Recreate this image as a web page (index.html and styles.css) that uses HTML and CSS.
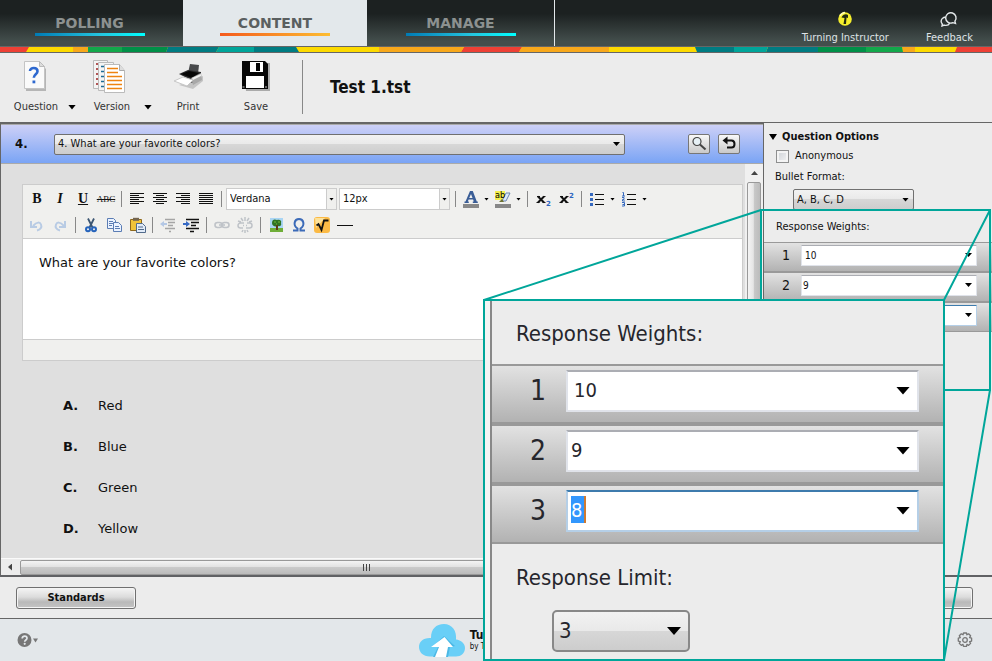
FILE: index.html
```html
<!DOCTYPE html>
<html lang="en">
<head>
<meta charset="utf-8">
<title>Test 1.tst</title>
<link rel="stylesheet" href="styles.css">
</head>
<body>
<header class="topbar">
  <nav class="tabs">
    <a class="tab" href="#polling">POLLING</a>
    <a class="tab tab-active" href="#content">CONTENT</a>
    <a class="tab tab-last" href="#manage">MANAGE</a>
  </nav>
  <div class="account">
    <a class="account-link" href="#instructor">
      <svg width="16" height="16" viewBox="0 0 16 16"><circle cx="8" cy="8" r="6.800" fill="#f5ee2c"/><path d="M3 5a6 6 0 0 1 5-3.500" stroke="#fffcb0" stroke-width="1.500" fill="none"/><path d="M4.500 6.500C6 3.500 9 2.500 11 4v3L9.500 6.500 9 13H6.500l1-6z" fill="#222a10"/></svg>
      <span>Turning Instructor</span>
    </a>
    <a class="account-link" href="#feedback">
      <svg width="18" height="16" viewBox="0 0 18 16" fill="none" stroke="#e4e8ea" stroke-width="1.400"><path d="M15.500 12.500l-.6-2.300a5.200 5.200 0 1 0-2 1.500z"/><path d="M6 6C2.500 6.200.9 8.500 1.200 10.800c.2 1 .6 1.600 1.100 2.100L2 15l2.200-.9c2.400.6 4.600-.2 5.600-2"/></svg>
      <span>Feedback</span>
    </a>
  </div>
</header>
<svg class="stripe" viewBox="0 0 992 5" preserveAspectRatio="none">
  <path fill="#fdda00" d="M0 0h992v5H0z"/>
  <path fill="#ee4035" d="M0 0h29l-3 5H0zM464 0h58l-3 5h-58zM957 0h35v5h-37z"/>
  <path fill="#f8a81b" d="M73 0h15v5H73zM379 0h85l-3 5h-82zM522 0h87v5h-90zM902 0h13v5h-12z"/>
  <path fill="#12a84b" d="M88 0h34v5H88zM866 0h36l1 5h-37z"/>
  <path fill="#009048" d="M122 0h46l-2 5h-44zM818 0h48v5h-48z"/>
  <path fill="#007c82" d="M168 0h51l-3 5h-50zM254 0h42l3 5h-45zM695 0h39v5h-37zM768 0h50v5h-52z"/>
  <path fill="#00a59a" d="M219 0h35v5h-38zM734 0h34l-2 5h-32z"/>
</svg>

<div class="toolbar">
  <button class="tool tool-drop" type="button">
    <svg width="32" height="32" viewBox="0 0 32 32"><path d="M6 3h14l6 6v22H6z" fill="#b5b5b5"/><path d="M4.500 1.500h15l5 5v22h-20z" fill="#fafafa" stroke="#c4c4c4"/><path d="M19.500 1.500v5h5z" fill="#ddd" stroke="#bbb"/><path d="M10 11c0-4 7.500-4 7.500.2 0 3-3.700 3-3.700 6.600" fill="none" stroke="#2d68cf" stroke-width="2.600"/><rect x="12.500" y="20.500" width="2.800" height="2.800" fill="#2d68cf"/></svg>
    <span>Question</span>
  </button>
  <button class="tool tool-drop" type="button">
    <svg width="40" height="34" viewBox="0 0 40 34"><path d="M1.500.5h14v28h-14z" fill="#f4f4f4" stroke="#bbb"/><path d="M4 4h4M4 9h4M4 14h4M4 19h4M4 24h4" stroke="#9b2020" stroke-width="1.300"/><path d="M6.500 2.500h15v28h-15z" fill="#f4f4f4" stroke="#bbb"/><path d="M9 6.500h4M9 11.500h4M9 16.500h4M9 21.500h4M9 26.500h4" stroke="#1d6c96" stroke-width="1.300"/><path d="M12.500 4.500h15l5 6v22h-20z" fill="#fff" stroke="#bbb"/><path d="M27.500 4.500v6h5" fill="#ddd" stroke="#aaa"/><path d="M15 8.500h11M15 12.500h11M15 16.500h15M15 20.500h15M15 24.500h15M15 28.500h15" stroke="#ee8310" stroke-width="1.300"/></svg>
    <span>Version</span>
  </button>
  <button class="tool" type="button">
    <svg width="34" height="30" viewBox="0 0 34 30"><path d="M8 25l14 4 10-8v-5z" fill="#c4c4c4"/><path d="M19 4l9 1-1 9-10-1z" fill="#48494b"/><path d="M8 14l9-4 13 2v5l-9 6-5-5z" fill="#2a2a2b"/><path d="M10 14l8-3 10 2-7 5z" fill="#060606"/><path d="M20 18l10-5 1 7-9 5z" fill="#a8a8a8"/><path d="M21 18l9-4v2l-8 4z" fill="#eee"/><path d="M3 21l9-4 10 3-6 6z" fill="#fff" stroke="#c8c8c8"/></svg>
    <span>Print</span>
  </button>
  <button class="tool" type="button">
    <svg width="32" height="32" viewBox="0 0 32 32"><path d="M4 3h26v28H6z" fill="#aaa"/><path d="M2 1h23l3 3v25H2z" fill="#060606"/><path d="M10 2h13v10H10z" fill="#fff"/><path d="M16 3h4v8h-4z" fill="#060606"/><path d="M6 16h18v12H6z" fill="#fff"/><path d="M2.500 26h2v2h-2zM25 26h2v2h-2z" fill="#666"/></svg>
    <span>Save</span>
  </button>
  <h1 class="file-title">Test 1.tst</h1>
</div>

<div class="workspace">
  <main class="question-pane">
    <div class="question-head">
      <label class="question-number" for="question">4.</label>
      <div class="pick question-pick"><select id="question"><option>4. What are your favorite colors?</option></select></div>
      <button class="icon-button" type="button" aria-label="Search"><svg width="18" height="18" viewBox="0 0 18 18" fill="none" stroke="#444"><circle cx="7" cy="6.500" r="4" fill="#e6f0f5" stroke-width="1.200"/><path d="M10 9.500l5.500 5" stroke-width="2"/></svg></button>
      <button class="icon-button" type="button" aria-label="Revert"><svg width="18" height="18" viewBox="0 0 18 18"><path d="M6 5.500h5.500q3 0 3 3.500t-3 3.500H7" fill="none" stroke="#111" stroke-width="2"/><path d="M2.500 5.500L7.500 1.500v8z" fill="#111"/></svg></button>
    </div>
    <div class="canvas">
      <div class="canvas-body">
        <section class="editor">
          <div class="edit-tools">
            <div class="edit-row">
              <button class="ed ed-b" type="button">B</button>
              <button class="ed ed-i" type="button">I</button>
              <button class="ed ed-u" type="button">U</button>
              <button class="ed ed-s" type="button">ABC</button>
              <i class="sep"></i>
              <button class="ed" type="button" aria-label="Left"><svg width="16" height="16"><path d="M1 2.500h14M1 4.500h9M1 6.500h14M1 8.500h9M1 10.500h14M1 12.500h9" stroke="#111"/></svg></button>
              <button class="ed" type="button" aria-label="Center"><svg width="16" height="16"><path d="M1 2.500h14M4 4.500h8M1 6.500h14M4 8.500h8M1 10.500h14M4 12.500h8" stroke="#111"/></svg></button>
              <button class="ed" type="button" aria-label="Right"><svg width="16" height="16"><path d="M1 2.500h14M6 4.500h9M1 6.500h14M6 8.500h9M1 10.500h14M6 12.500h9" stroke="#111"/></svg></button>
              <button class="ed" type="button" aria-label="Justify"><svg width="16" height="16"><path d="M1 2.500h14M1 4.500h14M1 6.500h14M1 8.500h14M1 10.500h14M1 12.500h14" stroke="#111"/></svg></button>
              <i class="sep"></i>
              <div class="pick font-pick"><select aria-label="Font"><option>Verdana</option></select></div>
              <div class="pick font-pick"><select aria-label="Size"><option>12px</option></select></div>
              <i class="sep"></i>
              <button class="ed ed-drop" type="button" aria-label="Text color"><svg width="18" height="18"><path d="M8 1h2.800l4 10.500h1V13h-5v-1.500h1l-.7-2H6.600l-.8 2h1V13H2.500v-1.500h1zM9 4L7.200 8h3.300z" fill="#3a5d96"/><path d="M1 14h16v4H1z" fill="#888"/></svg></button>
              <button class="ed ed-drop" type="button" aria-label="Highlight"><svg width="18" height="18"><path d="M1 1h10v9H1z" fill="#f4ee4c"/><path d="M12 3h4l-4 8H8z" fill="#dce8fa" stroke="#6d86b0"/><path d="M5 12l3-3 2 3z" fill="#6d7230"/><text class="glyph-ab" x="1" y="8">ab</text><path d="M1 14h16v4H1z" fill="#888"/></svg></button>
              <i class="sep"></i>
              <button class="ed" type="button" aria-label="Subscript"><svg width="16" height="16"><path d="M3 5.500l6 6M9 5.500l-6 6" stroke="#111" stroke-width="2"/><path d="M2 5.500h3M8 5.500h2.500M1.500 11.500h3M7.500 11.500h3" stroke="#111"/><text class="glyph-mini" x="11" y="15">2</text></svg></button>
              <button class="ed" type="button" aria-label="Superscript"><svg width="16" height="16"><path d="M3 5.500l6 6M9 5.500l-6 6" stroke="#111" stroke-width="2"/><path d="M2 5.500h3M8 5.500h2.500M1.500 11.500h3M7.500 11.500h3" stroke="#111"/><text class="glyph-mini" x="11" y="7">2</text></svg></button>
              <i class="sep"></i>
              <button class="ed ed-drop" type="button" aria-label="Bullets"><svg width="16" height="16"><path d="M6 3.500h9M6 8.500h9M6 13.500h9" stroke="#111"/><path d="M1 2h3v3H1zM1 7h3v3H1zM1 12h3v3H1z" fill="#3569bf"/></svg></button>
              <button class="ed ed-drop" type="button" aria-label="Numbering"><svg width="16" height="16"><path d="M6 3.500h9M6 8.500h9M6 13.500h9" stroke="#111"/><path d="M1.500 1.500h1V5M1 5h3M1 6.500h2v2H1.500v1.500H4M1 11.500h2.500v3.500H1M1.500 13.500h2" fill="none" stroke="#3569bf"/></svg></button>
            </div>
            <div class="edit-row">
              <button class="ed" type="button" aria-label="Undo"><svg width="16" height="16" fill="none" stroke="#b8cbe4" stroke-width="2"><path d="M8 13.500c4-1 5-3.500 4-6s-4-3-8 1.500"/><path d="M2 4v6h6" /></svg></button>
              <button class="ed" type="button" aria-label="Redo"><svg width="16" height="16" fill="none" stroke="#b8cbe4" stroke-width="2"><path d="M8 13.500c-4-1-5-3.500-4-6s4-3 8 1.500"/><path d="M13 4v6H7"/></svg></button>
              <i class="sep"></i>
              <button class="ed" type="button" aria-label="Cut"><svg width="16" height="16" fill="none"><path d="M5 1.500l4.500 9M11 1.500l-4.500 9" stroke="#3c5673" stroke-width="1.800"/><circle cx="5" cy="12.300" r="2" stroke="#2563bb" stroke-width="2"/><circle cx="11" cy="12.300" r="2" stroke="#2563bb" stroke-width="2"/></svg></button>
              <button class="ed" type="button" aria-label="Copy"><svg width="16" height="16" fill="#eaf2ff" stroke="#5b7db4"><path d="M1.500 1.500h6l2 2v8h-8zM3 4.500h4M3 6.500h4M3 8.500h3"/><path d="M7.500 5.500h5l3 3v6h-8zM9 9.500h4M9 11.500h5"/></svg></button>
              <button class="ed" type="button" aria-label="Paste"><svg width="17" height="16"><path d="M1.500 2.500h11v11h-11z" fill="#f0c33a" stroke="#8e681c"/><path d="M4 .8h6v3H4z" fill="#746550"/><path d="M7.500 6.500h6l3 3v6h-9z" fill="#e1ebf8" stroke="#526b8b"/><path d="M9 10h5M9 12.500h6" stroke="#526b8b"/></svg></button>
              <i class="sep"></i>
              <button class="ed" type="button" aria-label="Outdent"><svg width="18" height="16"><path d="M6 2.500h10M9 5.500h7M9 8.500h5M6 11.500h10M10 14.500h2" stroke="#a5a5a5" stroke-width="1.500"/><path d="M1 7l4-3v2h3v2H5v2z" fill="#b4c8e5"/></svg></button>
              <button class="ed" type="button" aria-label="Indent"><svg width="18" height="16"><path d="M4 2.500h13M9 5.500h8M9 8.500h5M4 11.500h13M8 14.500h4" stroke="#111" stroke-width="1.500"/><path d="M8 7L4 4v2H1v2h3v2z" fill="#3669c4"/></svg></button>
              <i class="sep"></i>
              <button class="ed" type="button" aria-label="Link"><svg width="16" height="16" fill="none" stroke="#bfc3c8" stroke-width="1.600"><rect x="1" y="5.500" width="7" height="5" rx="2.500"/><rect x="8" y="5.500" width="7" height="5" rx="2.500"/><path d="M5 8h6"/></svg></button>
              <button class="ed" type="button" aria-label="Unlink"><svg width="16" height="16" fill="none" stroke="#bfc3c8" stroke-width="1.500"><path d="M7 6H3.500a2.500 2.500 0 0 0 0 5H6M9 11h3.500a2.500 2.500 0 0 0 0-5H10M6 8.500h1M9 8.500h1M8 0v4M4 1l2 3M12 1l-2 3M1 4l3 1M15 4l-3 1M8 16v-3M5 15l1-2M11 15l-1-2"/></svg></button>
              <i class="sep"></i>
              <button class="ed" type="button" aria-label="Image"><svg width="16" height="16"><path d="M2 1h13v10H2z" fill="#a9d5f4"/><path d="M2 11h13v4H2z" fill="#6fae38"/><path d="M4 6c0-4 3-4 5-3 3-1 5 1 4 3 1 2-1 4-3 3-3 1-6 0-6-3z" fill="#2e7424"/><path d="M8 8h2v5H8z" fill="#5c3b18"/><path d="M6 5h2M10 5h2M8 7h1" stroke="#77b83a"/></svg></button>
              <button class="ed" type="button" aria-label="Symbol"><svg width="16" height="16"><path d="M2 13.500h4.500v-2C1.500 8 3.500 2 8 2s6.500 6 1.500 9.500v2H14" fill="none" stroke="#3c6bb8" stroke-width="2"/></svg></button>
              <button class="ed" type="button" aria-label="Equation"><svg width="18" height="18"><rect x="1" y="1" width="16" height="16" rx="3" fill="#fbba45"/><path d="M2 2h10L3 12z" fill="#fde29a"/><path d="M3.500 9.500l2-1.500 3 6 2.500-9.500h4.500" fill="none" stroke="#111" stroke-width="1.800"/></svg></button>
              <button class="ed" type="button" aria-label="Rule"><svg width="16" height="16"><path d="M0 8.500h16" stroke="#111"/></svg></button>
            </div>
          </div>
          <textarea class="edit-text" aria-label="Question text">What are your favorite colors?</textarea>
          <div class="edit-status"></div>
        </section>
        <ol class="answers">
          <li><b>A.</b><span>Red</span></li>
          <li><b>B.</b><span>Blue</span></li>
          <li><b>C.</b><span>Green</span></li>
          <li><b>D.</b><span>Yellow</span></li>
        </ol>
      </div>
      <div class="vscroll"><i class="arrow-up"></i><div class="vthumb"></div></div>
    </div>
    <div class="hscroll"><i class="arrow-left"></i><div class="hthumb"><i></i><i></i><i></i></div></div>
  </main>
  <aside class="options">
    <h2 class="options-title">Question Options</h2>
    <label class="check"><input type="checkbox">Anonymous</label>
    <label class="options-label" for="bullets">Bullet Format:</label>
    <div class="pick bullet-pick"><select id="bullets"><option>A, B, C, D</option></select></div>
    <h3 class="weights-title">Response Weights:</h3>
    <div class="weight"><label for="w1">1</label><div class="combo"><input id="w1" value="10"></div></div>
    <div class="weight"><label for="w2">2</label><div class="combo"><input class="one-digit" id="w2" value="9"></div></div>
    <div class="weight"><label for="w3">3</label><div class="combo combo-focus"><input class="one-digit" id="w3" value="8"></div></div>
  </aside>
</div>

<div class="actions">
  <button class="action" type="button">Standards</button>
  <button class="action" type="button" aria-label="Save"></button>
</div>

<footer class="footer">
  <button class="help" type="button" aria-label="Help"><svg width="22" height="16" viewBox="0 0 22 16"><circle cx="7.500" cy="8" r="7" fill="#777"/><path d="M5.200 6.500c0-3.200 4.800-3 4.800-.2 0 1.700-2.300 1.700-2.300 3.500" fill="none" stroke="#e4e8eb" stroke-width="1.700"/><circle cx="7.700" cy="11.800" r="1.100" fill="#e4e8eb"/><path d="M16 6.500h5l-2.500 4z" fill="#777"/></svg></button>
  <div class="brand">
    <svg width="46" height="33" viewBox="0 0 46 33"><path d="M11 32.500C4 32.500 0 28 0 23c0-5 4-9.500 12-9C12 5 17 0 25 0s13 7 12 15.500c5 .5 9 4 9 8.500 0 5-4 8.500-9 8.500z" fill="#69cff7"/><path d="M14 33l5-10h-6l12-11 11 10-5 1-2 10z" fill="#4cb8e5"/><path d="M16 33l4-10h-8l13.500-10L34 23h-5l-2 10z" fill="#fff"/></svg>
    <div><strong>Tu</strong><small>by T</small></div>
  </div>
  <button class="gear" type="button" aria-label="Settings"><svg width="16" height="16" viewBox="0 0 16 16" fill="none" stroke="#777"><path stroke-width="1.300" stroke-linejoin="round" d="M6.500 1h3l.4 1.800 1.700-1 2 2-1 1.800 2 .5v3l-2 .5 1 1.800-2 2-1.700-1-.4 1.900h-3l-.5-1.900-1.700 1-2-2 1-1.800-2-.5v-3l2-.5-1-1.800 2-2 1.700 1z"/><circle cx="8" cy="8" r="2.300" stroke-width="1.300"/></svg></button>
</footer>

<svg class="leader" width="992" height="661" fill="none" stroke="#00a69a" stroke-width="2"><path d="M761 210h229v180H761z"/><path d="M484 300l277-90M944 300l46-90M944 660l46-270"/></svg>
<section class="callout" aria-label="Response weights">
  <h3 class="big-title">Response Weights:</h3>
  <div class="weight big-weight"><label for="b1">1</label><div class="combo"><input id="b1" value="10"></div></div>
  <div class="weight big-weight"><label for="b2">2</label><div class="combo"><input class="one-digit" id="b2" value="9"></div></div>
  <div class="weight big-weight"><label for="b3">3</label><div class="combo combo-focus"><input class="one-digit selected" id="b3" value="8"></div></div>
  <label class="big-label" for="limit">Response Limit:</label>
  <div class="pick limit-pick"><select id="limit"><option>3</option></select></div>
</section>
</body>
</html>
```

FILE: styles.css
```css
* { box-sizing: border-box; }

body {
  margin: 0;
  min-height: 100vh;
  position: relative;
  display: flex;
  flex-direction: column;
  background: #ececec;
  color: #111;
  font: 11px/14px "DejaVu Sans Condensed", "DejaVu Sans", sans-serif;
}

button, select, input, textarea { font: inherit; color: inherit; }
button { padding: 0; border: 0; background: none; }
h1, h2, h3 { margin: 0; }
svg { display: block; }

/* top navigation */
.topbar {
  height: 46px;
  display: flex;
  justify-content: space-between;
  background: linear-gradient(#1c2121 30%, #434e4c 90%);
}
.tabs { display: flex; }
.tab {
  width: 183px;
  padding: 14px 4px 0 0;
  color: #8c9190;
  font-family: "DejaVu Sans", sans-serif;
  font-size: 14px;
  line-height: 18px;
  font-weight: bold;
  text-align: center;
  text-decoration: none;
}
.tab::after {
  content: "";
  display: block;
  width: 110px;
  height: 3px;
  margin: 1px auto 0;
  background: linear-gradient(90deg, #007bb5, #25c6e0 60%, #00ffff);
}
.tab-active { width: 184px; padding-right: 0; background: #e3e8eb; color: #5a5f60; }
.tab-active::after { background: linear-gradient(90deg, #f45a1c, #fdbd31); }
.tab-last { width: 188px; padding-right: 0; border-right: 1px solid #e3e8eb; }
.account { display: flex; padding: 11px 19px 0 0; gap: 37px; }
.account-link {
  display: flex;
  flex-direction: column;
  align-items: center;
  gap: 4px;
  color: #dfe3e5;
  text-decoration: none;
}
.stripe {
  width: 100%;
  height: 7px;
  border: solid #666;
  border-width: 1px 0;
}

/* file toolbar */
.toolbar { display: flex; height: 69px; padding: 7px 0 0 12px; }
.tool {
  width: 48px;
  margin-right: 20px;
  display: grid;
  grid-template-rows: 40px 14px;
  justify-items: center;
  color: #333;
}
.tool-drop { width: 64px; margin-right: 12px; grid-template-columns: 48px 16px; }
.tool-drop svg { grid-area: 1 / 1; }
.tool-drop span { grid-area: 2 / 1; }
.tool-drop::after {
  content: "";
  grid-area: 2 / 2;
  align-self: center;
  justify-self: end;
  width: 8px;
  height: 5px;
  background: #000;
  clip-path: polygon(0 0, 100% 0, 50% 100%);
}
.file-title {
  height: 54px;
  margin-left: 2px;
  padding-left: 27px;
  border-left: 1px solid #888;
  font-size: 17px;
  line-height: 54px;
}

/* work area */
.workspace { flex: 1; display: flex; border-top: 1px solid #666; border-bottom: 2px solid #606164; }
.question-pane {
  flex: 1;
  min-width: 0;
  display: flex;
  flex-direction: column;
  border: solid #666;
  border-width: 1px 1px 0 1px;
  background: #dfdfdf;
}
.question-head {
  display: flex;
  align-items: center;
  height: 40px;
  padding: 0 23px 0 14px;
  border: solid #aaa;
  border-width: 1px 0;
  background: linear-gradient(#cdd0f7, #7aa4f5);
}
.question-number { width: 39px; font-size: 13px; font-weight: bold; }
.pick { display: grid; align-items: center; }
.pick select {
  grid-area: 1 / 1;
  appearance: none;
  width: 100%;
  height: 21px;
  padding: 0 16px 0 3px;
  border: 1px solid #707070;
  border-radius: 2px;
  background: linear-gradient(#f2f2f2, #e9e9e9 49%, #d7d7d7 50%, #cdcdcd);
}
.pick::after, .combo::after {
  content: "";
  grid-area: 1 / 1;
  justify-self: end;
  width: 7px;
  height: 4px;
  margin-right: 5px;
  background: #000;
  clip-path: polygon(0 0, 100% 0, 50% 100%);
  pointer-events: none;
}
.question-pick { flex: 1; margin-right: 63px; }
.icon-button {
  width: 22px;
  height: 20px;
  display: grid;
  place-items: center;
  border: 1px solid #777;
  border-radius: 2px;
  background: linear-gradient(#f8f8f8, #c9c9c9);
}
.icon-button + .icon-button { margin-left: 8px; }

.canvas { flex: 1; display: flex; }
.canvas-body { flex: 1; padding: 20px 2px 0 21px; }
.editor { border: 1px solid #ccc; background: #f0f0ee; }
.edit-tools { padding: 3px 3px 2px; border-bottom: 1px solid #ccc; }
.edit-row { display: flex; align-items: center; gap: 1px; height: 22px; }
.edit-row + .edit-row { margin-top: 4px; }
.ed { width: 22px; height: 22px; display: grid; place-items: center; }
.ed-drop { width: 31px; grid-template-columns: 22px 9px; }
.ed-drop::after {
  content: "";
  width: 5px;
  height: 3px;
  background: #000;
  clip-path: polygon(0 0, 100% 0, 50% 100%);
}
.ed-b, .ed-i, .ed-u { font: bold 14px/22px "Liberation Serif", serif; }
.ed-i { font-style: italic; }
.ed-u { text-decoration: underline; }
.ed-s { font: 9px/22px "Liberation Serif", serif; text-decoration: line-through; }
.glyph-ab { font: 9px "DejaVu Sans Condensed", sans-serif; }
.glyph-mini { font: bold 7px "DejaVu Sans", sans-serif; fill: #2d64c0; }
.sep { width: 7px; height: 16px; background: linear-gradient(#888, #888) 3px 0 / 1px 100% no-repeat; }
.font-pick { width: 111px; margin-right: 1px; }
.font-pick select {
  height: 22px;
  border: 1px solid #ccc;
  border-radius: 0;
  background: linear-gradient(90deg, #ccc 1px, #f0f0ee 1px) right / 10px 100% no-repeat #fff;
}
.font-pick::after { width: 5px; height: 3px; margin-right: 3px; }
.edit-text {
  display: block;
  width: 100%;
  height: 100px;
  padding: 16px;
  border: 0;
  resize: none;
  background: #fff;
  font: 13px/16px "DejaVu Sans", sans-serif;
}
.edit-status { height: 21px; border-top: 1px solid #ccc; }
.answers {
  margin: 36px 0 0 41px;
  padding: 0;
  list-style: none;
  font: 13px/17px "DejaVu Sans", sans-serif;
}
.answers li { display: flex; margin-bottom: 24px; }
.answers li:last-child { margin-bottom: 0; }
.answers b { width: 35px; }

.vscroll { width: 18px; padding: 0 2px; background: #f0f0f0; display: flex; flex-direction: column; }
.arrow-up { width: 7px; height: 4px; margin: 7px 0 7px 4px; background: #444; clip-path: polygon(50% 0, 100% 100%, 0 100%); }
.vthumb { flex: 1; border: 1px solid #999; border-radius: 2px; background: linear-gradient(90deg, #f4f4f4, #e5e5e5 45%, #c9c9c9 50%, #bbb); }
.hscroll { display: flex; align-items: center; height: 17px; border-top: 1px solid #fafafa; background: #ececec; }
.arrow-left { width: 4px; height: 7px; margin: 0 8px 0 7px; background: #444; clip-path: polygon(0 50%, 100% 0, 100% 100%); }
.hthumb {
  flex: 1;
  height: 15px;
  margin-right: 50px;
  display: flex;
  align-items: center;
  justify-content: center;
  gap: 2px;
  border: 1px solid #999;
  border-radius: 2px;
  background: linear-gradient(#f4f4f4, #e2e2e2 45%, #cacaca 50%, #bbb);
}
.hthumb i { width: 1px; height: 7px; background: #444; }

/* question options */
.options { width: 228px; padding-top: 7px; }
.options-title { display: flex; align-items: center; gap: 5px; padding-left: 5px; font-size: 11px; line-height: 14px; }
.options-title::before { content: ""; width: 8px; height: 6px; background: #000; clip-path: polygon(0 0, 100% 0, 50% 100%); }
.check { display: flex; align-items: center; gap: 6px; margin: 5px 0 0 12px; }
.check input {
  appearance: none;
  width: 13px;
  height: 13px;
  margin: 0;
  border: 1px solid #8e8f8f;
  background: linear-gradient(135deg, #cdd1d6, #f4f4f4);
  box-shadow: inset 0 0 0 2px #f4f4f4;
}
.options-label { display: block; margin: 7px 0 5px 11px; }
.bullet-pick { width: 121px; margin-left: 29px; }
.weights-title { padding: 10px 0 8px 12px; font-size: 11px; font-weight: normal; }
.weight {
  display: flex;
  align-items: center;
  height: 30px;
  padding: 0 15px 4px 0;
  border: solid #999;
  border-width: 1px 0 1px;
  background: linear-gradient(#e2e2e2, #b2b2b2);
}
.weight label { width: 37px; padding-left: 7px; text-align: center; font-size: 14px; }
.combo { flex: 1; display: grid; align-items: center; }
.combo input {
  grid-area: 1 / 1;
  width: 100%;
  min-width: 0;
  height: 21px;
  padding: 0 16px 0 3px;
  border: 1px solid #e0e3ea;
  border-top-color: #abadb3;
  border-radius: 1px;
  background: #fff;
  font-size: 10px;
}
.combo .one-digit { padding-left: 1px; }
.combo-focus input { border-color: #b5cfe7; border-top-color: #3d7bad; }

/* bottom bars */
.actions { display: flex; justify-content: space-between; padding: 10px 19px 9px 16px; border-bottom: 1px solid #666; }
.action {
  width: 120px;
  height: 22px;
  border: 1px solid #707070;
  border-radius: 3px;
  background: linear-gradient(#f5f5f5, #dcdcdc 45%, #b9b9b9 70%, #c4c4c4);
  box-shadow: inset 0 0 0 1px #f4f4f4;
  font-weight: bold;
}
.footer { display: flex; justify-content: space-between; align-items: center; height: 42px; padding: 0 19px 0 17px; background: #e3e7ea; }
.brand { display: flex; align-items: center; gap: 5px; margin-right: 92px; }
.brand strong, .brand small { display: block; }
.brand strong { font-size: 12px; line-height: 13px; }
.brand small { font-size: 8px; line-height: 10px; }

/* enlarged detail over the page */
.leader { position: absolute; top: 0; right: 0; pointer-events: none; }
.callout {
  position: absolute;
  top: 299px;
  right: 47px;
  bottom: 0;
  width: 462px;
  border: 2px solid #00a69a;
  background: linear-gradient(90deg, #f4f4f4 5px, #888 5px, #888 7px, #ececec 7px);
  padding-left: 7px;
  color: #26262c;
  font-size: 22px;
  line-height: 28px;
}
.big-title { padding: 19px 0 16px 24px; font-size: 22px; font-weight: normal; }
.big-weight { height: 60px; padding: 0 24px 7px 0; border-width: 2px 0; }
.big-weight label { width: 74px; padding-left: 18px; font-size: 28px; }
.big-weight .combo input { height: 42px; padding: 0 32px 2px 6px; border-width: 2px; font-size: 20px; }
.big-weight .combo .one-digit { padding-left: 3px; }
.big-weight .combo::after, .limit-pick::after { width: 14px; height: 8px; margin-right: 9px; }
.combo .selected { color: #fff; background: linear-gradient(90deg, #3297fd 13px, #d07a30 13px) 3px 4px / 15px 27px no-repeat #fff; }
.big-label { display: block; margin: 20px 0 18px 24px; }
.limit-pick { width: 138px; margin-left: 60px; }
.limit-pick select { height: 42px; padding-left: 5px; border: 2px solid #888; border-radius: 5px; }
```
